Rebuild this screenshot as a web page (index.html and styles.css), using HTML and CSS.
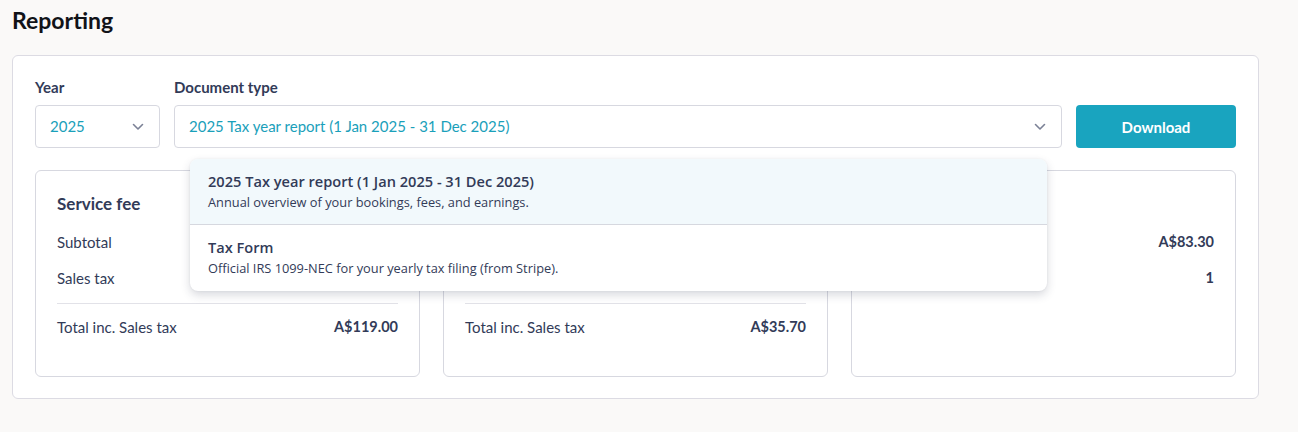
FILE: index.html
```html
<!DOCTYPE html>
<html>
<head>
<meta charset="utf-8">
<link rel="stylesheet" href="styles.css">
</head>
<body>
<div class="page">
  <h1 class="title">Reporting</h1>
  <div class="panel">
    <div class="controls">
      <div class="field field-year">
        <label class="label">Year</label>
        <div class="select">
          <span class="select-value">2025</span>
          <svg class="chevron" width="12" height="8" viewBox="0 0 12 8"><path d="M1.5 1.5 L6 6 L10.5 1.5" fill="none" stroke="#7b8196" stroke-width="1.6" stroke-linecap="round" stroke-linejoin="round"/></svg>
        </div>
      </div>
      <div class="field field-doc">
        <label class="label">Document type</label>
        <div class="select select-doc">
          <span class="select-value">2025 Tax year report (1 Jan 2025 - 31 Dec 2025)</span>
          <svg class="chevron" width="12" height="8" viewBox="0 0 12 8"><path d="M1.5 1.5 L6 6 L10.5 1.5" fill="none" stroke="#7b8196" stroke-width="1.6" stroke-linecap="round" stroke-linejoin="round"/></svg>
          <div class="menu">
            <div class="menu-item active">
              <div class="menu-title">2025 Tax year report (1 Jan 2025 - 31 Dec 2025)</div>
              <div class="menu-desc">Annual overview of your bookings, fees, and earnings.</div>
            </div>
            <div class="menu-item">
              <div class="menu-title">Tax Form</div>
              <div class="menu-desc">Official IRS 1099-NEC for your yearly tax filing (from Stripe).</div>
            </div>
          </div>
        </div>
      </div>
      <button class="download">Download</button>
    </div>
    <div class="cards">
      <div class="card">
        <div class="card-title">Service fee</div>
        <div class="row"><span>Subtotal</span><span class="val">A$108.18</span></div>
        <div class="row"><span>Sales tax</span><span class="val">A$10.82</span></div>
        <div class="divider"></div>
        <div class="row"><span>Total inc. Sales tax</span><span class="val">A$119.00</span></div>
      </div>
      <div class="card">
        <div class="card-title">Booking fee</div>
        <div class="row"><span>Subtotal</span><span class="val">A$32.45</span></div>
        <div class="row"><span>Sales tax</span><span class="val">A$3.25</span></div>
        <div class="divider"></div>
        <div class="row"><span>Total inc. Sales tax</span><span class="val">A$35.70</span></div>
      </div>
      <div class="card">
        <div class="card-title">Earnings</div>
        <div class="row"><span>Total earnings</span><span class="val">A$83.30</span></div>
        <div class="row"><span>Bookings</span><span class="val">1</span></div>
      </div>
    </div>
  </div>
</div>
</body>
</html>
```

FILE: styles.css
```css
* { box-sizing: border-box; }
html, body { margin: 0; padding: 0; }
body {
  background: #faf9f8;
  font-family: Lato, "Open Sans", "Liberation Sans", sans-serif;
  color: #323b58;
}
.page {
  padding: 5px 39px 0 12px;
}
.title {
  margin: 0;
  font-size: 23px;
  font-weight: 700;
  color: #111318;
  line-height: 30px;
  height: 50px;
}
.panel {
  background: #fff;
  border: 1px solid #dcdbe3;
  border-radius: 6px;
  padding: 21px 22px 21px 22px;
}
.controls {
  display: flex;
  align-items: flex-end;
  gap: 14px;
}
.field { display: flex; flex-direction: column; }
.field-year { width: 125px; }
.field-doc { flex: 1; }
.label {
  font-size: 15px;
  font-weight: 700;
  color: #323b58;
  line-height: 20px;
  margin-bottom: 8px;
}
.select {
  position: relative;
  height: 43px;
  border: 1px solid #d7d8e0;
  border-radius: 4px;
  background: #fff;
  display: flex;
  align-items: center;
  justify-content: space-between;
  padding: 0 15px 0 14px;
}
.select-value {
  color: #1aa0ba;
  font-size: 15px;
  line-height: 20px;
  margin-top: -1px;
}
.chevron { display: block; }
.download {
  width: 160px;
  height: 43px;
  border: none;
  border-radius: 4px;
  background: #19a4bf;
  color: #fff;
  font-family: Lato, "Open Sans", sans-serif;
  font-size: 15px;
  font-weight: 700;
}
.menu {
  position: absolute;
  left: 15px;
  right: 14px;
  top: 53px;
  background: #fff;
  border-radius: 8px;
  box-shadow: 0 4px 10px rgba(40, 45, 70, 0.18), 0 0 2px rgba(40,45,70,0.08);
  overflow: hidden;
  z-index: 10;
  font-family: "Open Sans", "Liberation Sans", sans-serif;
}
.menu-item {
  height: 66px;
  padding: 12px 19px 0 18px;
}
.menu-item.active {
  background: #f2f9fc;
  border-bottom: 1px solid #d6d8df;
}
.menu-title {
  font-size: 14.6px;
  font-weight: 600;
  color: #323b58;
  line-height: 20px;
}
.menu-desc {
  font-size: 12.8px;
  color: #323b58;
  line-height: 20px;
  margin-top: 1px;
}
.cards {
  display: flex;
  gap: 23px;
  margin-top: 22px;
}
.card {
  flex: 1;
  height: 207px;
  border: 1px solid #d7d8e0;
  border-radius: 6px;
  padding: 22px 21px 0 21px;
}
.card-title {
  font-size: 17px;
  font-weight: 700;
  line-height: 22px;
  margin-bottom: 13px;
}
.row {
  display: flex;
  justify-content: space-between;
  font-size: 15px;
  line-height: 20px;
  padding: 4px 0;
  margin-bottom: 8px;
}
.row .val { font-weight: 700; font-size: 14.5px; }
.divider {
  height: 1px;
  background: #e2e2e8;
  margin: 11px 0 9px 0;
}
```
